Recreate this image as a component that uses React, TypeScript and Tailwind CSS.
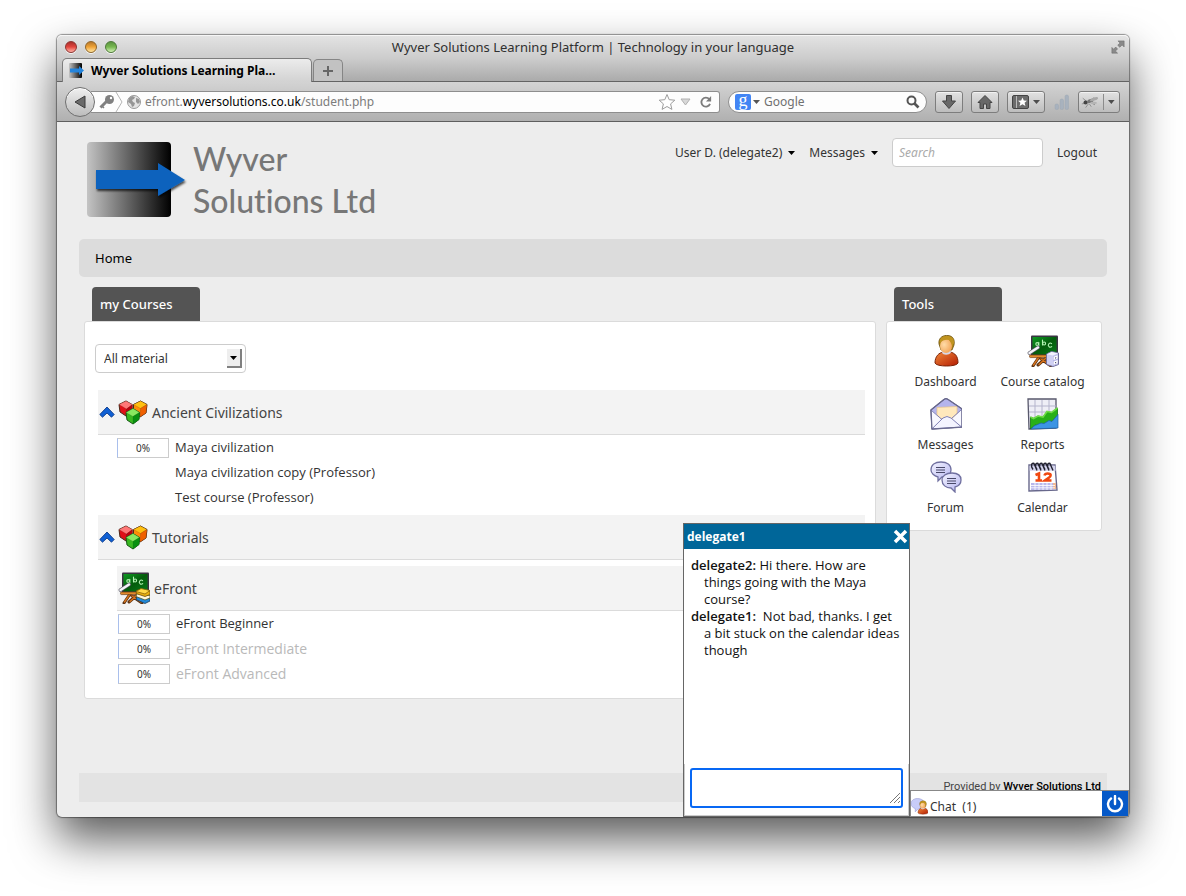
import type { ReactNode } from 'react';

function BoardBase() {
  return (
    <>
      <path d="M12 22 L6 31 M14 24 L24 31 M19 23 L11 30" stroke="#5b3214" strokeWidth="3" strokeLinecap="round" />
      <path d="M12 22 L6.500 30 M14 24 L23 30 M19 23 L12 29.500" stroke="#d8741c" strokeWidth="1.400" strokeLinecap="round" />
      <rect x="4" y="0.500" width="27" height="20.500" rx="1" fill="#3a3442" />
      <rect x="5.500" y="2" width="24" height="17.500" fill="url(#boardGreen)" />
      <rect x="2.500" y="20" width="27" height="2.600" rx="1" fill="#e58a2c" stroke="#6e3c12" strokeWidth="0.7" />
      <g fill="none" stroke="#b4f4b4" strokeWidth="1.100" strokeLinecap="round">
        <circle cx="10.200" cy="9" r="1.400" />
        <path d="M11.800 7.400v3.300M15.500 5v5" />
        <circle cx="17.100" cy="8.500" r="1.500" />
        <path d="M24.600 8.600a2 2 0 1 0 .1 3" />
      </g>
      <path d="M2.500 18 L11 12.500" stroke="#5a5a66" strokeWidth="3.800" strokeLinecap="round" />
      <path d="M2.500 18 L11 12.500" stroke="#f4f4fa" strokeWidth="2.500" strokeLinecap="round" />
    </>
  );
}

function IconDefs() {
  return (
    <svg width="0" height="0" className="absolute" aria-hidden="true">
      <defs>
        <linearGradient id="boardGreen" x1="0" y1="0" x2="1" y2="1">
          <stop offset="0" stopColor="#0e9a22" />
          <stop offset="0.5" stopColor="#045c0c" />
          <stop offset="1" stopColor="#087a18" />
        </linearGradient>
        <linearGradient id="lilac" x1="0" y1="0" x2="1" y2="1">
          <stop offset="0" stopColor="#f4f4ff" />
          <stop offset="1" stopColor="#b4b4f0" />
        </linearGradient>
        <radialGradient id="face" cx="0.35" cy="0.4" r="0.8">
          <stop offset="0" stopColor="#ffdca8" />
          <stop offset="1" stopColor="#f09a48" />
        </radialGradient>
        <linearGradient id="shirt" x1="0" y1="0" x2="1" y2="1">
          <stop offset="0" stopColor="#f08838" />
          <stop offset="1" stopColor="#b41c04" />
        </linearGradient>
      </defs>
    </svg>
  );
}

function Icon({ children }: { children: ReactNode }) {
  return (
    <svg viewBox="0 0 32 32" className="size-8 shrink-0" fill="none" aria-hidden="true">
      {children}
    </svg>
  );
}

function CatalogIcon() {
  return (
    <Icon>
      <BoardBase />
      <path d="M19.500 19l5-2.500 7 1.500v11.500L26 31.500l-6.500-2z" fill="#d0d0f4" stroke="#70709c" strokeWidth="1" />
      <path d="M20 19.200l4.500-2.200 6.500 1.200-5 2.300z" fill="#f4f4ff" />
      <path d="M26 21l5-2v10l-5 2z" fill="#b8b8e8" />
      <path d="M26.600 21.800l4-1.500v3.200l-4 1.500zM26.600 26.500l4-1.500v3.200l-4 1.500z" fill="#fff" />
      <path d="M28 23.200l1.200-.5M28 27.900l1.200-.5" stroke="#303058" />
    </Icon>
  );
}

function LessonIcon() {
  return (
    <Icon>
      <BoardBase />
      <path d="M18 27.500l9 4 5-2.500v-2.500l-13-2z" fill="#2288d8" stroke="#1c3c58" strokeWidth="0.8" />
      <path d="M18 24.500l9 3.500 5-2v-2.500l-13-2z" fill="#fff6dc" stroke="#4c5828" strokeWidth="0.8" />
      <path d="M18 21.500l9 3 5-2V19l-13-1z" fill="#e8b010" stroke="#6c4c08" strokeWidth="0.8" />
      <path d="M18 19.500l5-3 9 2-5 3.500z" fill="#ffd848" stroke="#8c6408" strokeWidth="0.8" />
    </Icon>
  );
}

function PersonShape() {
  return (
    <>
      <path d="M5 28c0-7 4-10 8-11h7c5 1 8 4 8 11-1 4-22 4-23 0z" fill="url(#shirt)" stroke="#7c2408" strokeWidth="1" />
      <path d="M12 17.500c1 3 7 3 9 0l-1-2h-7z" fill="#d8d8e8" />
      <path d="M9 9c-1-7 5-9 9-8.500 5 .5 7 4 6 9.500l-2 5H11z" fill="#b08818" stroke="#6c500c" strokeWidth="0.8" />
      <ellipse cx="16" cy="11" rx="6" ry="7" fill="url(#face)" />
      <path d="M10 8c2-3 6-3.500 9-3 1 2 3 3 3 6l2-3c0-5-3-7-7-7-5 0-8 3-7 7z" fill="#c09420" />
    </>
  );
}

function DashboardIcon() {
  return <Icon><PersonShape /></Icon>;
}

function EnvelopeIcon() {
  return (
    <Icon>
      <path d="M1 12L14 1.500q2-1.500 4 0L32 11v18L2 31z" fill="url(#lilac)" stroke="#68688c" strokeWidth="1.400" strokeLinejoin="round" />
      <path d="M1.500 12L15 1.500l3 .2L31.500 11 27 16H6z" fill="#b4b4ec" />
      <path d="M7 9.500l20-1v11l-10 3-10-3z" fill="#ffe8bc" stroke="#e8c488" strokeWidth="0.7" />
      <path d="M1.500 12.500L12 22 2 30.500zM31.500 12L21.500 21.500l10 7z" fill="#f8f8ff" />
      <path d="M2 30.800L13 20q4-3 8 0L31.500 29z" fill="#f4f4ff" stroke="#8080b4" strokeWidth="1" />
      <path d="M1.500 12.500L12 21.500M31.500 11.500L21.500 20.500" stroke="#8080b4" strokeWidth="1" />
      <path d="M1 12L14 1.500q2-1.500 4 0L32 11v18L2 31z" stroke="#68688c" strokeWidth="1.200" strokeLinejoin="round" />
    </Icon>
  );
}

function ReportsIcon() {
  return (
    <Icon>
      <path d="M1 1h28v29L2 31z" fill="#eeeef6" stroke="#58586c" strokeWidth="1.300" />
      <path d="M8 2v25M15 2v25M22 2v25M2 8h27M2 14h27M2 20h27" stroke="#b4b4cc" strokeWidth="1" />
      <path d="M3.500 19l3 1.500 4.500-2.500 5 1 4-5.500 4.500 1 6-4.500v8l-6 6-5 1-6 4-5-2-5 4z" fill="#28b018" stroke="#10780c" strokeWidth="0.800" />
      <path d="M3.500 19l3 1.500L11 18l5 1 4-5.500 4.500 1 6-4.500" stroke="#70dc48" strokeWidth="1.600" />
      <path d="M4 31l3-3 7-3 3 .5 5-3 3 1 6-7v13.500z" fill="#3c94e4" stroke="#1c60a8" strokeWidth="0.700" />
    </Icon>
  );
}

function ForumIcon() {
  return (
    <Icon>
      <path d="M11 1c6 0 10 3 10 8s-4 7-9 7l-4 4v-4c-4-1-7-4-7-7 0-5 4-8 10-8z" fill="url(#lilac)" stroke="#7070a0" strokeWidth="1.300" />
      <path d="M6 6.500h9M6 9h9M6 11.500h9" stroke="#484868" />
      <path d="M22 12c6 0 9 3 9 7 0 3-2 6-6 7v5l-4-4c-5 0-9-3-9-8 0-4 4-7 10-7z" fill="url(#lilac)" stroke="#7070a0" strokeWidth="1.300" />
      <path d="M17 17.500h9M17 20h9M17 22.500h9" stroke="#484868" />
    </Icon>
  );
}

function CalendarIcon() {
  return (
    <Icon>
      <path d="M2 4h26l2 25-28 1z" fill="#fff" stroke="#68688c" strokeWidth="1.400" />
      <path d="M2.700 4.700h25.500l.5 5H2.700z" fill="#d4d4ee" />
      <path d="M4 22h24v6.500L4 29z" fill="#b8b8ec" />
      <path d="M26 22h3v6h-3z" fill="#f0b894" />
      <path d="M4 24.500h24M4 26.800h24M8 22v7M12 22v7M16 22v7M20 22v7M24 22v7" stroke="#fff" strokeWidth="0.8" />
      <path d="M6 8.500c-3-4-1-7 1-6l3 7M10 8.500c-3-4-1-7 1-6l3 7M14 8.500c-3-4-1-7 1-6l3 7M18 8.500c-3-4-1-7 1-6l3 7M22 8.500c-3-4-1-7 1-6l3 7" stroke="#222230" strokeWidth="1.400" />
      <path d="M8.500 14l3.500-1.500V19M8.500 19.500H15M17.500 14.500q.5-2 3.200-2c4 0 3.500 2.800 1 4.400L18 19.500h6.500" stroke="#f04810" strokeWidth="2.600" />
    </Icon>
  );
}

function CubesIcon() {
  return (
    <svg width="30" height="25" viewBox="0 0 30 25" aria-hidden="true">
      <g stroke="#4a2a18" strokeWidth="1" strokeLinejoin="round">
        <path d="M8 1l6 3.500v7L8 16l-6-4-1-7.500z" fill="#e01018" />
        <path d="M1 4.500L8 1l6.500 3.500-6 4.500z" fill="#ff7878" strokeWidth="0.200" />
        <path d="M8.500 9l6-4.500v7L8 16z" fill="#b80410" strokeWidth="0.200" />
        <path d="M22.500 1L29 4.500l-1 8.500-6 4-6.500-5V4.500z" fill="#ff8c08" />
        <path d="M15.500 4.500l7-3.500L29 4.500l-6.500 4z" fill="#ffc010" strokeWidth="0.200" />
        <path d="M22.500 8.500l6.500-4-1 8.500-6 4z" fill="#f06000" strokeWidth="0.200" />
        <path d="M15 8.500l6.500 4-.5 7-6 4.500-6-4-1-7.500z" fill="#38b820" stroke="#185818" />
        <path d="M8 12.500l7-4 6.500 4-6.500 4z" fill="#88e860" stroke="#185818" strokeWidth="0.200" />
        <path d="M15 16.500l6.500-4-.5 7-6 4.500z" fill="#089010" stroke="#185818" strokeWidth="0.200" />
      </g>
    </svg>
  );
}

function CollapseIcon() {
  return (
    <svg width="16" height="12" viewBox="0 0 16 12" aria-hidden="true">
      <path d="M.8 8.500L8 1l7.200 7.500-2.700 2.700L8 7l-4.500 4.200z" fill="#1060d4" stroke="#103c88" strokeWidth="0.900" />
    </svg>
  );
}

function Caret({ className = '' }: { className?: string }) {
  return (
    <svg width="7" height="4" viewBox="0 0 7 4" fill="currentColor" className={className} aria-hidden="true">
      <path d="M0 0h7L3.500 4z" />
    </svg>
  );
}

function Logo() {
  return (
    <svg width="106" height="80" viewBox="0 0 106 80" aria-hidden="true">
      <defs>
        <linearGradient id="logoShade">
          <stop offset="0" stopColor="#c4c4c4" />
          <stop offset="1" stopColor="#000" />
        </linearGradient>
        <filter id="logoShadow" x="-10%" y="-10%" width="125%" height="140%">
          <feDropShadow dx="1" dy="2" stdDeviation="1.200" floodOpacity="0.7" />
        </filter>
      </defs>
      <rect x="0" y="1" width="84" height="75" rx="4" fill="url(#logoShade)" />
      <path d="M9 29h62v-7l27 17-27 16v-7H9z" fill="#0c62bd" filter="url(#logoShadow)" />
    </svg>
  );
}

const toolbarButton =
  'flex h-[22px] items-center justify-center rounded-[3px] border border-[#7d7d7d] bg-linear-to-b from-[#e2e2e2] to-[#bdbdbd] text-[#4d4d4d] shadow-[inset_0_1px_0_#f2f2f2]';

function BrowserChrome() {
  const lights = [
    { label: 'Close window', cls: 'from-[#a82f2c] via-[#e4463f] to-[#ffb0a8] border-[#8c3330]' },
    { label: 'Minimise window', cls: 'from-[#b8782c] via-[#f0a436] to-[#ffe8a0] border-[#8f6428]' },
    { label: 'Zoom window', cls: 'from-[#5a9440] via-[#78b850] to-[#d4f4b8] border-[#4c7838]' },
  ];
  return (
    <header className="rounded-t-[5px] font-['Noto_Sans',sans-serif]">
      <div className="rounded-t-[5px] bg-linear-to-b from-[#e4e4e4] via-[#cccccc] to-[#a9a9a9] shadow-[inset_0_1px_0_#f6f6f6]">
        <div className="grid h-[23px] grid-cols-[1fr_auto_1fr] items-center px-2">
          <div className="flex gap-2">
            {lights.map((l) => (
              <button
                key={l.label}
                aria-label={l.label}
                className={`size-3 rounded-full border bg-linear-to-b shadow-[0_1px_0_#f4f4f4] ${l.cls}`}
              />
            ))}
          </div>
          <h1 className="text-[13px] leading-5 text-[#303030]">
            Wyver Solutions Learning Platform | Technology in your language
          </h1>
          <button aria-label="Full screen" className="-mr-1 justify-self-end">
            <svg width="14" height="14" viewBox="0 0 16 16" fill="#8a8a8a" stroke="#6a6a6a" strokeWidth="0.6" aria-hidden="true">
              <path d="M8 1h7v7l-2.300-2.300L10 8.300 7.700 6l2.600-2.600zM1 8.500L3 10.500 5.400 8l2.100 2.200L5 12.700 7.500 15H1z" />
            </svg>
          </button>
        </div>
        <div className="flex h-6 items-end border-b border-[#636363] px-[5px]">
          <button className="-mb-px flex h-6 w-[250px] items-center gap-[7px] rounded-t-[5px] border border-b-0 border-[#7c7c7c] bg-linear-to-b from-[#ececec] to-[#d2d2d2] px-1.5 text-[12px] font-bold text-black">
            <svg width="15" height="15" viewBox="0 0 15 15" aria-hidden="true">
              <rect width="13" height="15" rx="1" fill="url(#logoShade)" />
              <path d="M1 5.500h9V3l5 4.500L10 12V9.500H1z" fill="#2484dc" />
            </svg>
            Wyver Solutions Learning Pla…
          </button>
          <button aria-label="New tab" className="ml-px flex h-[22px] w-[30px] items-center justify-center rounded-t-[5px] border border-b-0 border-[#858585] bg-[#c2c2c2] text-[#666]">
            <svg width="12" height="12" viewBox="0 0 12 12" aria-hidden="true"><path d="M6 1v10M1 6h10" stroke="currentColor" strokeWidth="2" /></svg>
          </button>
        </div>
      </div>
      <div className="flex h-10 items-center border-b border-[#5f5f5f] bg-linear-to-b from-[#d3d3d3] to-[#b0b0b0] px-2">
        <button aria-label="Back" className="z-10 flex size-[30px] shrink-0 items-center justify-center rounded-full border border-[#6f6f6f] bg-linear-to-b from-[#f0f0f0] to-[#bcbcbc] shadow-[inset_0_1px_0_#fff]">
          <svg width="12" height="14" viewBox="0 0 12 14" aria-hidden="true"><path d="M11 1v12L1 7z" fill="#6a6a6a" stroke="#3c3c3c" /></svg>
        </button>
        <div className="-ml-1 flex h-[22px] flex-1 items-center rounded-r-[3px] border border-l-0 border-[#8e8e8e] bg-[#fdfdfd] pl-2 text-[12px]">
          <svg width="16" height="16" viewBox="0 0 16 16" aria-hidden="true" className="shrink-0">
            <circle cx="10.500" cy="5.500" r="4.500" fill="#808080" />
            <path d="M8 7l-6.500 6.500" stroke="#808080" strokeWidth="3" />
            <path d="M3 12l2 2" stroke="#808080" strokeWidth="1.500" />
            <circle cx="12" cy="4" r="1.200" fill="#fff" />
          </svg>
          <svg width="8" height="20" viewBox="0 0 8 20" aria-hidden="true" className="shrink-0"><path d="M1 0l6 10-6 10" fill="none" stroke="#b4b4b4" /></svg>
          <svg width="14" height="14" viewBox="0 0 14 14" aria-hidden="true" className="mx-1 shrink-0">
            <circle cx="7" cy="7" r="6.500" fill="#e4e4e4" stroke="#9a9a9a" />
            <path d="M2 3l3-2 3 1-1 2-2 1 1 2 2 1-1 3-2 1-1-3-3-2zM9 3l3 1 1 3-2 2-2-2z" fill="#969696" />
          </svg>
          <div
            role="textbox"
            aria-label="Address"
            contentEditable
            suppressContentEditableWarning
            className="min-w-0 flex-1 overflow-hidden whitespace-nowrap text-[#7c7c7c] outline-none"
          >
            efront.<span className="text-black">wyversolutions.co.uk</span>/student.php
          </div>
          <button aria-label="Bookmark this page">
            <svg width="18" height="18" viewBox="0 0 18 18" aria-hidden="true"><path d="M9 1.500l2.200 5.200 5.600.5-4.200 3.700 1.300 5.500L9 13.500l-4.900 2.900 1.300-5.500L1.200 7.200l5.600-.5z" fill="#fff" stroke="#9c9c9c" /></svg>
          </button>
          <button aria-label="Address history" className="mx-1">
            <svg width="11" height="8" viewBox="0 0 11 8" aria-hidden="true"><path d="M1 1h9L5.500 7z" fill="#d8d8d8" stroke="#b0b0b0" /></svg>
          </button>
          <button aria-label="Reload" className="mr-1.5 ml-1">
            <svg width="14" height="14" viewBox="0 0 15 15" fill="none" aria-hidden="true">
              <path d="M11 4.500A4.800 4.800 0 1 0 11.800 9.500" stroke="#7c7c7c" strokeWidth="2" /><path d="M13 1v6H7.500z" fill="#7c7c7c" />
            </svg>
          </button>
        </div>
        <div className="ml-2 flex h-[22px] w-[199px] items-center rounded-full border border-[#8e8e8e] bg-[#fdfdfd] px-1.5">
          <button aria-label="Search engine" className="flex items-center gap-0.5 text-[#555]">
            <span className="flex size-4 items-start justify-center rounded-[2px] bg-[#4285f4] font-['Liberation_Serif',serif] text-[18px] leading-3 text-white">g</span>
            <Caret />
          </button>
          <input aria-label="Google search" placeholder="Google" className="ml-1 min-w-0 flex-1 bg-transparent text-[12px] outline-none placeholder:text-[#707070]" />
          <button aria-label="Search the web">
            <svg width="14" height="14" viewBox="0 0 14 14" fill="none" stroke="#555" strokeWidth="2" aria-hidden="true"><circle cx="5.500" cy="5.500" r="4" /><path d="M8.500 8.500l4 4" strokeWidth="2.600" /></svg>
          </button>
        </div>
        <button aria-label="Downloads" className={`ml-2 w-7 ${toolbarButton}`}>
          <svg width="16" height="16" viewBox="0 0 16 16" aria-hidden="true"><path d="M5.500 1.500h5V7h4L8 14.500 1.500 7h4z" fill="#686868" stroke="#444" /></svg>
        </button>
        <button aria-label="Home page" className={`ml-2 w-7 ${toolbarButton}`}>
          <svg width="16" height="16" viewBox="0 0 16 16" aria-hidden="true"><path d="M8 1.500l7 7h-2v6H9.500V10h-3v4.500H3v-6H1z" fill="#686868" stroke="#444" /></svg>
        </button>
        <button aria-label="Bookmarks" className={`ml-2 w-[38px] gap-1 ${toolbarButton}`}>
          <svg width="17" height="14" viewBox="0 0 17 14" aria-hidden="true">
            <rect x="0.500" y="0.500" width="16" height="13" rx="1.500" fill="#6c6c6c" stroke="#444" /><path d="M4.500 1v12" stroke="#bbb" />
            <path d="M10.500 2.500l1.300 3 3.200.2-2.400 2 .8 3.300-2.900-1.800L7.600 11l.8-3.300L6 5.700l3.200-.2z" fill="#fff" />
          </svg>
          <Caret />
        </button>
        <svg width="16" height="16" viewBox="0 0 16 16" className="ml-[9px]" aria-label="Signal strength" role="img">
          <g fill="#a8b2be" stroke="#98a4b0" strokeWidth="0.400"><rect x="1" y="10" width="3.500" height="5.500" rx="1.500" /><rect x="6" y="5" width="3.500" height="10.500" rx="1.500" /><rect x="11" y="1" width="3.500" height="14.500" rx="1.500" /></g>
        </svg>
        <button aria-label="Add-on" className={`mr-px ml-2 w-[42px] ${toolbarButton}`}>
          <svg width="26" height="16" viewBox="0 0 26 16" aria-hidden="true">
            <g stroke="#888" strokeWidth="0.900" fill="none"><path d="M9 8L4 4M9 9l-6 1M10 10l-3 4M11 10l2 3M13 9l4 2M12 7l4-4" /></g>
            <circle cx="7" cy="8.500" r="2.200" fill="#444" /><ellipse cx="12" cy="7" rx="3.500" ry="2" fill="#777" transform="rotate(-20 12 7)" /><ellipse cx="16" cy="5" rx="4.500" ry="1.600" fill="#a8a8a8" transform="rotate(-20 16 5)" />
            <ellipse cx="15.500" cy="9" rx="3.500" ry="1.200" fill="#b4b4b4" />
          </svg>
          <span className="h-4 w-px bg-[#8c8c8c]" />
          <Caret className="mx-1" />
        </button>
      </div>
    </header>
  );
}

function Tab({ children }: { children: ReactNode }) {
  return (
    <h2 className="ml-2 h-[34px] w-[108px] rounded-t-[4px] bg-[#545454] px-2 text-[13px] leading-[34px] font-medium text-white">
      {children}
    </h2>
  );
}

function CategoryHeader({ title, children }: { title: string; children: ReactNode }) {
  return (
    <div className="flex h-[45px] items-center gap-1 border-b border-[#dbdbdb] bg-[#f3f3f3] text-[14px] text-[#444]">
      {children}
      <h3>{title}</h3>
    </div>
  );
}

function CourseRow({ title, progress, muted }: { title: string; progress?: number; muted?: boolean }) {
  return (
    <li className="flex h-[25px] items-center gap-1.5">
      <div className="w-[52px]">
        {progress !== undefined && (
          <div className="h-5 border border-[#ccc] border-l-[#a9bfec] bg-white text-center text-[10px] leading-[19px] text-[#333]">
            {progress}%
          </div>
        )}
      </div>
      <a href="#" className={muted ? "font-['Open_Sans',sans-serif] text-[14px] text-[#b9b9b9]" : "font-['Open_Sans',sans-serif] text-[13px] text-[#333]"}>{title}</a>
    </li>
  );
}

const tools = [
  { label: 'Dashboard', icon: <DashboardIcon /> },
  { label: 'Course catalog', icon: <CatalogIcon /> },
  { label: 'Messages', icon: <EnvelopeIcon /> },
  { label: 'Reports', icon: <ReportsIcon /> },
  { label: 'Forum', icon: <ForumIcon /> },
  { label: 'Calendar', icon: <CalendarIcon /> },
];

function ChatMessage({ from, children }: { from: string; children: ReactNode }) {
  return (
    <p className="pl-[13px] -indent-[13px]">
      <b className="font-semibold">{from}:</b> {children}
    </p>
  );
}

function ChatWindow() {
  return (
    <section className="flex h-[294px] w-[227px] flex-col border border-[#666] bg-white font-['Open_Sans',sans-serif] text-[13px] text-[#111]">
      <div className="flex h-[25px] items-center justify-between bg-[#006699] pl-[3px] text-[12px] font-bold text-white">
        <h2>delegate1</h2>
        <button aria-label="Close chat">
          <svg width="17" height="17" viewBox="0 0 17 17" aria-hidden="true"><path d="M3 3l11 11M14 3L3 14" stroke="#fff" strokeWidth="3.500" /></svg>
        </button>
      </div>
      <div className="flex-1 px-[7px] pt-2 leading-[17px]">
        <ChatMessage from="delegate2">Hi there. How are things going with the Maya course?</ChatMessage>
        <ChatMessage from="delegate1">&nbsp;Not bad, thanks. I get a bit stuck on the calendar ideas though</ChatMessage>
      </div>
      <div className="relative border-x border-b border-[#ccc] px-[5px] pt-1 pb-[7px]">
        <textarea aria-label="Chat message" className="block h-10 w-full resize-none rounded-[3px] border-2 border-[#0868f4] bg-white p-1 outline-none" />
        <svg width="12" height="12" viewBox="0 0 12 12" className="pointer-events-none absolute right-[7px] bottom-[11px]" aria-hidden="true"><path d="M1 11L11 1M5 11l6-6M9 11l2-2" stroke="#777" /></svg>
      </div>
    </section>
  );
}

function ChatBar() {
  return (
    <section className="flex h-[27px] w-[219px] items-stretch border border-[#888] bg-white">
      <button className="flex flex-1 items-center gap-0.5 pt-1.5 text-[12px] text-[#333]">
        <svg width="17" height="17" viewBox="0 0 32 32" aria-hidden="true">
          <path d="M12 1c8 0 13 4 13 10s-5 10-12 10l-5 5v-6C3 18 0 15 0 11 0 5 5 1 12 1z" fill="#c8ccf8" stroke="#9094d0" />
          <g transform="translate(9 5) scale(.82)"><PersonShape /></g>
        </svg>
        Chat&nbsp; (1)
      </button>
      <button aria-label="Turn chat off" className="flex w-[26px] items-center justify-center bg-[#0659c8]">
        <svg width="18" height="18" viewBox="0 0 18 18" fill="none" stroke="#fff" strokeWidth="2.400" strokeLinecap="round" aria-hidden="true"><path d="M5 3.500a7 7 0 1 0 8 0M9 1v8" /></svg>
      </button>
    </section>
  );
}

export default function App() {
  return (
    <div className="min-h-screen overflow-hidden bg-white px-[57px] pt-[35px] pb-[79px] font-['Noto_Sans',sans-serif]">
      <IconDefs />
      <div className="relative rounded-[5px] bg-[#ededed] shadow-[0_0_1px_1px_rgba(0,0,0,0.4),0_22px_45px_rgba(0,0,0,0.65)]">
        <BrowserChrome />
        <div className="px-[22px] pb-[15px]">
          <div className="flex h-[117px] items-start justify-between pr-[10px] pl-2">
            <a href="#" className="mt-[19px] flex font-['Lato',sans-serif] text-[32px] leading-[42px] font-medium text-[#777] [font-variant-ligatures:none]">
              <Logo />
              <span className="-mt-[3px]">Wyver<br />Solutions Ltd</span>
            </a>
            <nav className="mt-4 flex items-center gap-[14px] text-[12px] text-[#333]">
              <button className="flex items-center gap-1.5">User D. (delegate2) <Caret className="text-black" /></button>
              <button className="flex items-center gap-1.5">Messages <Caret className="text-black" /></button>
              <input type="search" aria-label="Search" placeholder="Search" className="h-[29px] w-[151px] rounded-[4px] border border-[#ccc] bg-white px-1.5 outline-none placeholder:text-[#aaa] placeholder:italic" />
              <a href="#">Logout</a>
            </nav>
          </div>
          <nav className="h-[38px] rounded-[5px] bg-[#dcdcdc] px-4 text-[13px] leading-[38px] text-black">
            <a href="#">Home</a>
          </nav>
          <main className="mt-[10px] flex items-start gap-[10px] px-[5px]">
            <section className="min-w-0 flex-1">
              <Tab>my Courses</Tab>
              <div className="rounded-[3px] border border-[#dbdbdb] bg-white px-[10px] pt-[22px] pb-3">
                <div className="relative inline-block">
                  <select aria-label="Material" className="block h-[29px] w-[151px] appearance-none rounded-[4px] border border-[#ccc] bg-white px-2 text-[12px] text-[#333] outline-none">
                    <option>All material</option>
                  </select>
                  <span className="pointer-events-none absolute top-[5px] right-1 flex h-[19px] w-[15px] items-center justify-center border-r-2 border-b-2 border-[#808080] bg-[#eee] text-black"><Caret /></span>
                </div>
                <div className="mt-[17px] ml-[3px]">
                  <CategoryHeader title="Ancient Civilizations">
                    <span className="flex items-center gap-[3px] pl-px"><CollapseIcon /><CubesIcon /></span>
                  </CategoryHeader>
                  <ul className="pb-[5px] pl-[19px]">
                    <CourseRow title="Maya civilization" progress={0} />
                    <CourseRow title="Maya civilization copy (Professor)" />
                    <CourseRow title="Test course (Professor)" />
                  </ul>
                  <CategoryHeader title="Tutorials">
                    <span className="flex items-center gap-[3px] pl-px"><CollapseIcon /><CubesIcon /></span>
                  </CategoryHeader>
                  <div className="mt-1.5 ml-[19px]">
                    <CategoryHeader title="eFront">
                      <span className="pl-px"><LessonIcon /></span>
                    </CategoryHeader>
                    <ul className="pl-px">
                      <CourseRow title="eFront Beginner" progress={0} />
                      <CourseRow title="eFront Intermediate" progress={0} muted />
                      <CourseRow title="eFront Advanced" progress={0} muted />
                    </ul>
                  </div>
                </div>
              </div>
            </section>
            <aside className="w-[216px]">
              <Tab>Tools</Tab>
              <div className="grid grid-cols-2 rounded-[3px] border border-[#dbdbdb] bg-white px-[10px] pt-[13px] pb-[6px]">
                {tools.map((t) => (
                  <a key={t.label} href="#" className="flex h-[63px] flex-col items-center text-[12px] whitespace-nowrap text-[#333]">
                    {t.icon}
                    <span className="mt-[5px] leading-5">{t.label}</span>
                  </a>
                ))}
              </div>
            </aside>
          </main>
          <footer className="mt-[74px] h-[29px] bg-[#e3e3e3] px-1.5 text-right font-['Roboto',sans-serif] text-[11px] leading-7 text-[#444]">
            Provided by <a href="#" className="font-medium text-black">Wyver Solutions Ltd</a>
          </footer>
        </div>
        <div className="absolute right-0 bottom-0 flex items-end">
          <ChatWindow />
          <ChatBar />
        </div>
      </div>
    </div>
  );
}
